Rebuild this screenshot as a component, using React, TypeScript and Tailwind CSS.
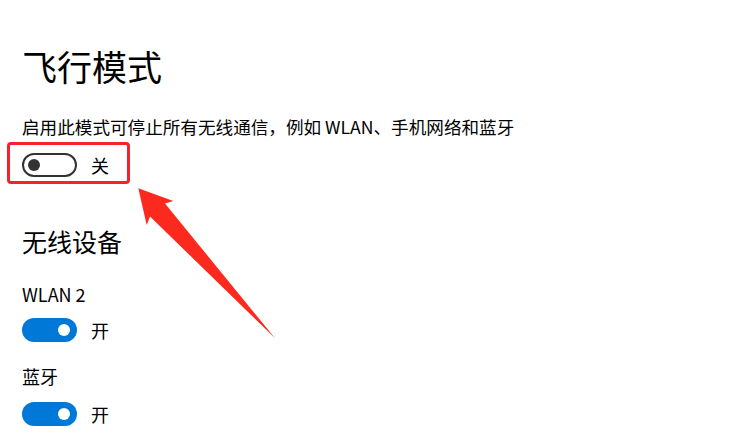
import React from 'react'

const font = { fontFamily: '"Noto Sans CJK SC", "Noto Sans", sans-serif' }

function Toggle({ on }: { on: boolean }) {
  if (on) {
    return (
      <div className="flex h-[24px] w-[55px] items-center justify-end rounded-full bg-[#0078d7] pr-[7px]">
        <div className="h-[12px] w-[12px] rounded-full bg-white" />
      </div>
    )
  }
  return (
    <div className="flex h-[24px] w-[55px] items-center rounded-full border-2 border-[#333333] pl-[4px]">
      <div className="h-[12px] w-[12px] rounded-full bg-[#333333]" />
    </div>
  )
}

function ToggleRow({ on, mt }: { on: boolean; mt: string }) {
  return (
    <div className={`flex h-[24px] items-center ${mt}`}>
      <Toggle on={on} />
      <span className="ml-[14px] text-[18px] leading-[24px] text-black">{on ? '开' : '关'}</span>
    </div>
  )
}

export default function App() {
  return (
    <div className="relative h-[432px] w-[736px] overflow-hidden bg-white pl-[22px] text-black" style={font}>
      <div className="mt-[42px] h-[48px] text-[35px] leading-[48px]">飞行模式</div>
      <div className="mt-[25px] h-[24px] text-[17.6px] leading-[24px]">
        启用此模式可停止所有无线通信，例如 WLAN、手机网络和蓝牙
      </div>
      <ToggleRow on={false} mt="mt-[14px]" />
      <div className="mt-[47px] h-[34px] text-[25px] leading-[34px]">无线设备</div>
      <div className="mt-[24px] h-[24px] text-[18px] leading-[24px]">WLAN 2</div>
      <ToggleRow on={true} mt="mt-[12px]" />
      <div className="mt-[22px] h-[24px] text-[18px] leading-[24px]">蓝牙</div>
      <ToggleRow on={true} mt="mt-[14px]" />

      {/* annotation overlay */}
      <div className="absolute left-[7px] top-[142px] h-[42px] w-[123px] rounded-[4px] border-[3px] border-[#f5222d]" />
      <svg className="absolute left-0 top-0" width="736" height="432" viewBox="0 0 736 432">
        <polygon
          points="138.3,188.3 173.3,201 165,203.5 275,338.3 150,216.5 146.7,225"
          fill="#fc2a1e"
        />
      </svg>
    </div>
  )
}
